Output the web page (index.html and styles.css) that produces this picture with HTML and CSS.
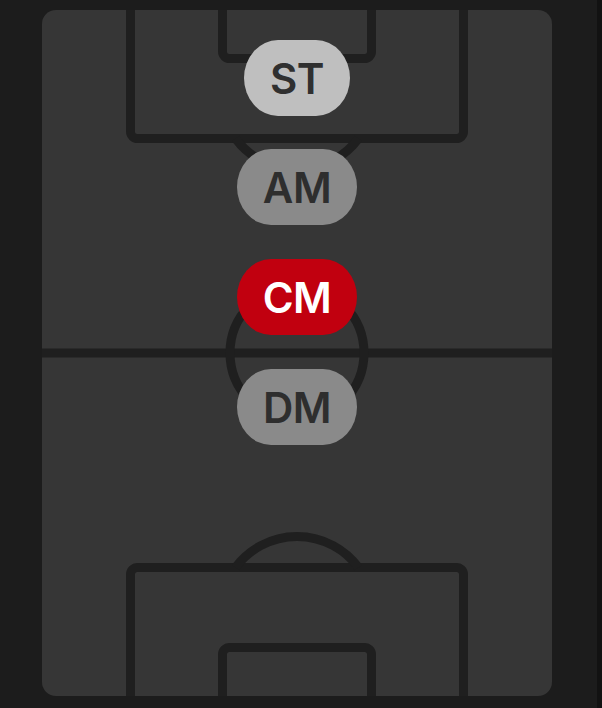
FILE: index.html
```
<!DOCTYPE html>
<html lang="en">
<head>
  <meta charset="UTF-8">
  <title>Positions</title>
  <meta name="viewport" content="width=device-width, initial-scale=1.0">
  <link rel="stylesheet" href="styles.css">
</head>
<body>

  <div class="pitch">
    <!-- Pitch markings -->
    <svg class="lines" viewBox="42 10 510 686" width="510" height="686">
      <g fill="none" stroke="#1f1f1f" stroke-width="9">
        <!-- top half -->
        <rect x="130.5" y="-40" width="333" height="178.5" rx="7" />
        <rect x="222.5" y="-40" width="149" height="98.5" rx="7" />
        <path d="M235.5 138.5 A76.5 76.5 0 0 0 358.5 138.5" />
        <!-- halfway -->
        <line x1="0" y1="353" x2="602" y2="353" />
        <circle cx="297" cy="353" r="67" />
        <!-- bottom half -->
        <rect x="130.5" y="567.5" width="333" height="178.5" rx="7" />
        <rect x="222.5" y="647.5" width="149" height="98.5" rx="7" />
        <path d="M235.5 567.5 A76.5 76.5 0 0 1 358.5 567.5" />
      </g>
    </svg>

    <span class="pos pos-st">ST</span>
    <span class="pos pos-am">AM</span>
    <span class="pos pos-cm">CM</span>
    <span class="pos pos-dm">DM</span>
  </div>

</body>
</html>
```

FILE: styles.css
```
* {
  box-sizing: border-box;
  margin: 0;
  padding: 0;
}

html {
  background: #121212;
}

body {
  width: 597px;
  height: 708px;
  background: #1c1c1c;
  padding: 10px 0 0 42px;
  font-family: Inter, 'Noto Sans', sans-serif;
  overflow: hidden;
}

.pitch {
  position: relative;
  width: 510px;
  height: 686px;
  background: #363636;
  border-radius: 14px;
  overflow: hidden;
}

.lines {
  position: absolute;
  left: 0;
  top: 0;
  display: block;
}

.pos {
  position: absolute;
  left: 50%;
  transform: translateX(-50%);
  display: flex;
  align-items: center;
  justify-content: center;
  width: 120px;
  height: 76px;
  border-radius: 34px / 38px;
  background: #8a8a8a;
  color: #2e2e2e;
  font-size: 42px;
  font-weight: 600;
  letter-spacing: -0.5px;
}

.pos-st {
  top: 30px;
  width: 106px;
  background: #bfbfbf;
  color: #303030;
}

.pos-am {
  top: 139px;
}

.pos-cm {
  top: 249px;
  background: #c1000f;
  color: #fff;
}

.pos-dm {
  top: 359px;
}
```
